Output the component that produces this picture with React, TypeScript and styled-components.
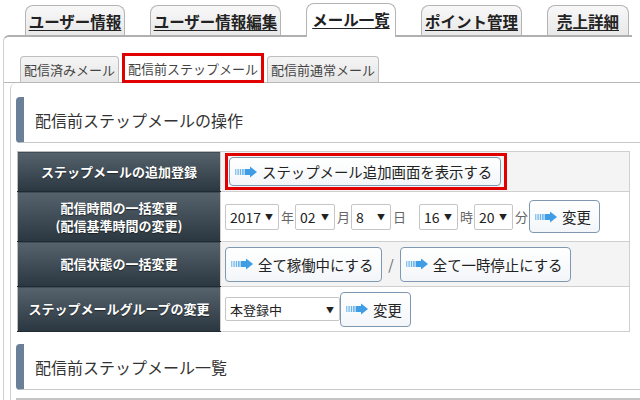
import React from "react";
import styled, { createGlobalStyle } from "styled-components";

const GlobalStyle = createGlobalStyle`
  html, body {
    margin: 0;
    padding: 0;
    background: #fff;
    overflow: hidden;
  }
  body {
    font-family: "Noto Sans CJK JP", "Noto Sans", sans-serif;
    color: #333;
  }
`;

const mainTabs: { id: number; label: string; width: number; active?: boolean }[] = [
  { id: 1, label: "ユーザー情報", width: 100 },
  { id: 2, label: "ユーザー情報編集", width: 131 },
  { id: 3, label: "メール一覧", width: 90, active: true },
  { id: 4, label: "ポイント管理", width: 101 },
  { id: 5, label: "売上詳細", width: 82 },
];

const subTabs: { id: number; label: string; active?: boolean }[] = [
  { id: 1, label: "配信済みメール" },
  { id: 2, label: "配信前ステップメール", active: true },
  { id: 3, label: "配信前通常メール" },
];

const ArrowIcon = () => (
  <svg width="24" height="12" viewBox="0 0 24 12">
    <rect x="0" y="3" width="1.4" height="6" fill="#8fc6ef" />
    <rect x="2.4" y="3" width="1.4" height="6" fill="#7bbcec" />
    <rect x="4.8" y="3" width="1.4" height="6" fill="#66b2ea" />
    <rect x="7.2" y="3" width="1.4" height="6" fill="#52a8e8" />
    <rect x="9.6" y="3" width="5.4" height="6" fill="#3e9de4" />
    <polygon points="15,0.5 22,6 15,11.5" fill="#3e9de4" />
  </svg>
);

const Page = styled.div`
  width: 660px;
  padding-top: 3px;
`;

const TabBar = styled.div`
  display: flex;
  align-items: flex-end;
  gap: 25px;
  height: 32px;
  width: 628px;
  margin-left: 3px;
  padding-left: 22px;
  box-sizing: border-box;
  position: relative;
  z-index: 1;
`;

const Tab = styled.div<{ $active?: boolean; $w: number }>`
  width: ${(p) => p.$w}px;
  height: ${(p) => (p.$active ? 34 : 30)}px;
  margin-bottom: ${(p) => (p.$active ? -2 : 0)}px;
  box-sizing: border-box;
  display: flex;
  align-items: center;
  justify-content: center;
  padding-bottom: ${(p) => (p.$active ? 3 : 0)}px;
  border: 1px solid #b4b4b4;
  border-bottom: none;
  border-radius: 8px 8px 0 0;
  background: ${(p) => (p.$active ? "#fff" : "linear-gradient(#f8f8f8, #e8e8e8)")};
  font-size: 15.5px;
  font-weight: bold;
  color: #222;
  text-decoration: underline;
  text-underline-offset: 2px;
  white-space: nowrap;
`;

const Outer = styled.div`
  margin-left: 3px;
  width: 628px;
  border-top: 2px solid #b0b0b0;
  border-left: 1px solid #cfcfcf;
  border-top-left-radius: 6px;
  padding-top: 16px;
`;

const SubTabBar = styled.div`
  display: flex;
  align-items: flex-end;
  gap: 3px;
  width: 660px;
  padding-left: 16px;
  box-sizing: border-box;
  border-bottom: 1px solid #b8b8b8;
`;

const SubTab = styled.div<{ $active?: boolean }>`
  height: ${(p) => (p.$active ? 30 : 26)}px;
  box-sizing: border-box;
  display: flex;
  align-items: center;
  padding: 0 ${(p) => (p.$active ? 3 : 3)}px;
  margin-bottom: ${(p) => (p.$active ? -1 : 0)}px;
  background: ${(p) => (p.$active ? "#fff" : "linear-gradient(#f5f5f5, #e6e6e6)")};
  border: ${(p) => (p.$active ? "3px solid #e00000" : "1px solid #bdbdbd")};
  border-bottom: ${(p) => (p.$active ? "3px solid #e00000" : "none")};
  border-radius: ${(p) => (p.$active ? "0" : "4px 4px 0 0")};
  font-size: 13px;
  color: #444;
  white-space: nowrap;
`;

const Inner = styled.div`
  margin-left: 6px;
  width: 650px;
  border-left: 1px solid #d0d0d0;
  border-top-left-radius: 6px;
  padding: 14px 0 0 5px;
`;

const Heading = styled.h2<{ $top?: number }>`
  margin: ${(p) => p.$top ?? 0}px 0 0 0;
  height: 46px;
  box-sizing: border-box;
  display: flex;
  align-items: center;
  padding-left: 11px;
  border-left: 8px solid #6a7f98;
  border-bottom: 1px solid #c8c8c8;
  border-radius: 4px 0 0 4px;
  font-size: 16px;
  font-weight: normal;
  color: #333;
`;

const OpTable = styled.table`
  margin: 8px 0 0 1px;
  width: 613px;
  border-collapse: collapse;
  border: 1px solid #bcbcbc;
`;

const Row = styled.tr<{ $h: number; $shade?: boolean }>`
  height: ${(p) => p.$h}px;
  background: ${(p) => (p.$shade ? "#f4f4f4" : "#fff")};
`;

const HeadCell = styled.th`
  width: 202px;
  padding: 0;
  background: linear-gradient(#56626c, #2b3740);
  border-bottom: 1px solid #1f2a31;
  color: #fff;
  font-size: 13px;
  font-weight: bold;
  line-height: 18px;
  text-shadow: 0 1px 1px rgba(0, 0, 0, 0.5);
  text-align: center;
`;

const Cell = styled.td`
  padding: 0 0 0 4px;
  border: 1px solid #cfcfcf;
  font-size: 13px;
  color: #555;
`;

const CellRow = styled.div`
  display: flex;
  align-items: center;
`;

const Highlight = styled.span`
  display: inline-flex;
  border: 3px solid #e00000;
  padding: 1px 3px 1px 1px;
`;

const Button = styled.button<{ $h?: number }>`
  display: inline-flex;
  align-items: center;
  gap: 3px;
  height: ${(p) => p.$h ?? 35}px;
  padding: 0 8px 0 5px;
  background: linear-gradient(#ffffff, #f3f6f9);
  border: 1px solid #7f98b2;
  border-radius: 4px;
  font-family: inherit;
  font-size: 14.4px;
  color: #222;
  white-space: nowrap;
  cursor: pointer;
`;

const SelectBox = styled.span<{ $w: number; $h?: number; $small?: boolean }>`
  display: inline-flex;
  align-items: center;
  justify-content: space-between;
  width: ${(p) => p.$w}px;
  height: ${(p) => p.$h ?? 26}px;
  box-sizing: border-box;
  padding: 0 5px 0 4px;
  background: #fff;
  border: 1px solid #c6c6c6;
  border-radius: 2px;
  font-size: ${(p) => (p.$small ? 13 : 14)}px;
  color: #222;

  &::after {
    content: "▼";
    font-size: 8px;
    color: #222;
  }
`;

const Unit = styled.span<{ $gap?: number }>`
  font-size: 13px;
  color: #666;
  padding: 0 ${(p) => p.$gap ?? 1}px 0 2px;
`;

const Slash = styled.span`
  padding: 0 6px;
  font-size: 14px;
  color: #666;
`;

const NextTableTop = styled.div`
  margin-top: 8px;
  border-top: 2px solid #c4c4c4;
`;

const App = () => {
  return (
    <>
      <GlobalStyle />
      <Page>
        <TabBar>
          {mainTabs.map(({ id, label, width, active }) => (
            <Tab key={id} $w={width} $active={active}>
              {label}
            </Tab>
          ))}
        </TabBar>
        <Outer>
          <SubTabBar>
            {subTabs.map(({ id, label, active }) => (
              <SubTab key={id} $active={active}>
                {label}
              </SubTab>
            ))}
          </SubTabBar>
          <Inner>
            <Heading>配信前ステップメールの操作</Heading>
            <OpTable>
              <tbody>
                <Row $h={40} $shade>
                  <HeadCell>ステップメールの追加登録</HeadCell>
                  <Cell>
                    <Highlight>
                      <Button $h={29}>
                        <ArrowIcon />
                        ステップメール追加画面を表示する
                      </Button>
                    </Highlight>
                  </Cell>
                </Row>
                <Row $h={50}>
                  <HeadCell>
                    配信時間の一括変更
                    <br />
                    (配信基準時間の変更)
                  </HeadCell>
                  <Cell>
                    <CellRow>
                      <SelectBox $w={54}>2017</SelectBox>
                      <Unit>年</Unit>
                      <SelectBox $w={40}>02</SelectBox>
                      <Unit>月</Unit>
                      <SelectBox $w={40}>8</SelectBox>
                      <Unit $gap={13}>日</Unit>
                      <SelectBox $w={39}>16</SelectBox>
                      <Unit>時</Unit>
                      <SelectBox $w={39}>20</SelectBox>
                      <Unit>分</Unit>
                      <Button $h={33}>
                        <ArrowIcon />
                        変更
                      </Button>
                    </CellRow>
                  </Cell>
                </Row>
                <Row $h={45} $shade>
                  <HeadCell>配信状態の一括変更</HeadCell>
                  <Cell>
                    <CellRow>
                      <Button>
                        <ArrowIcon />
                        全て稼働中にする
                      </Button>
                      <Slash>/</Slash>
                      <Button>
                        <ArrowIcon />
                        全て一時停止にする
                      </Button>
                    </CellRow>
                  </Cell>
                </Row>
                <Row $h={45}>
                  <HeadCell>ステップメールグループの変更</HeadCell>
                  <Cell>
                    <CellRow>
                      <SelectBox $w={115} $h={24} $small>
                        本登録中
                      </SelectBox>
                      <Button>
                        <ArrowIcon />
                        変更
                      </Button>
                    </CellRow>
                  </Cell>
                </Row>
              </tbody>
            </OpTable>
            <Heading $top={12}>配信前ステップメール一覧</Heading>
            <NextTableTop />
          </Inner>
        </Outer>
      </Page>
    </>
  );
};

export default App;
